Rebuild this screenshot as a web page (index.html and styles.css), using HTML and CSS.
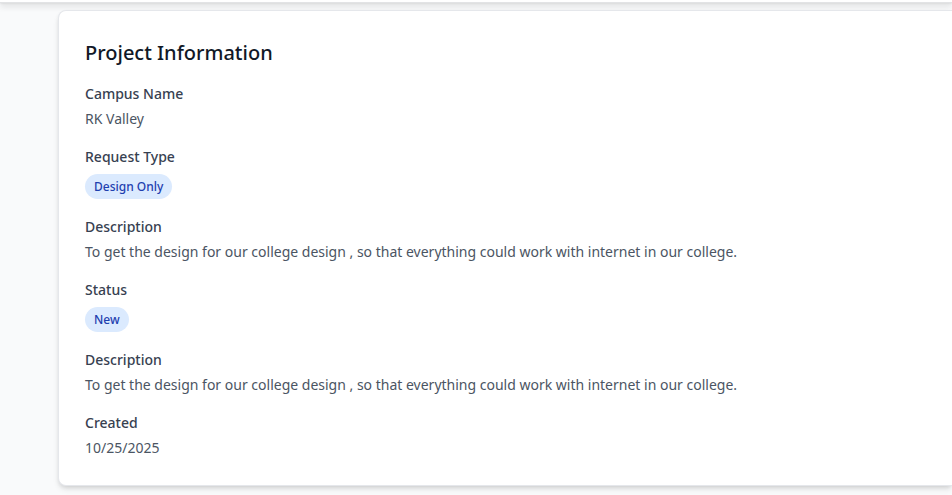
FILE: index.html
```html
<!DOCTYPE html>
<html lang="en">
<head>
<meta charset="utf-8">
<meta name="viewport" content="width=device-width, initial-scale=1">
<title>Project Information</title>
<link rel="stylesheet" href="styles.css">
</head>
<body>
<header class="topbar"></header>
<main class="page">
  <section class="card">
    <h2 class="card-title">Project Information</h2>
    <dl class="details">
      <div class="item"><dt>Campus Name</dt><dd>RK Valley</dd></div>
      <div class="item"><dt>Request Type</dt><dd><span class="badge">Design Only</span></dd></div>
      <div class="item"><dt>Description</dt><dd>To get the design for our college design , so that everything could work with internet in our college.</dd></div>
      <div class="item"><dt>Status</dt><dd><span class="badge">New</span></dd></div>
      <div class="item"><dt>Description</dt><dd>To get the design for our college design , so that everything could work with internet in our college.</dd></div>
      <div class="item"><dt>Created</dt><dd>10/25/2025</dd></div>
    </dl>
  </section>
</main>
</body>
</html>
```
FILE: styles.css
```css
* { box-sizing: border-box; }

body {
  margin: 0;
  background: #f9fafb;
  color: #4b5563;
  font-family: "Segoe UI", "Noto Sans", "Open Sans", sans-serif;
  font-size: 14px;
  line-height: 21px;
}

.topbar {
  height: 3px;
  background: #fff;
  border-bottom: 1px solid #e2e3e5;
  box-shadow: 0 3px 6px rgba(0, 0, 0, 0.16), 0 1px 2px rgba(0, 0, 0, 0.08);
}

.page { padding: 7px 0 9px 58px; }

.card {
  padding: 28px 26px 27px;
  background: #fff;
  border: 1px solid #e5e7eb;
  border-right: 0;
  border-radius: 8px 0 0 8px;
  box-shadow: 0 4px 6px -1px rgba(0, 0, 0, 0.1), 0 2px 4px -1px rgba(0, 0, 0, 0.1);
}

.card-title {
  margin: 0 0 16px;
  color: #111827;
  font-size: 20px;
  font-weight: 500;
  line-height: 28px;
}

.details {
  display: grid;
  gap: 17px;
  margin: 0;
}

.item {
  display: grid;
  gap: 4px;
  justify-items: start;
}

dt {
  color: #374151;
  font-weight: 500;
}

dd { margin: 0; }

.badge {
  display: block;
  margin-top: 3px;
  padding: 2px 9px;
  border-radius: 999px;
  background: #dbeafe;
  color: #1e40af;
  font-size: 12px;
  font-weight: 500;
}
```
